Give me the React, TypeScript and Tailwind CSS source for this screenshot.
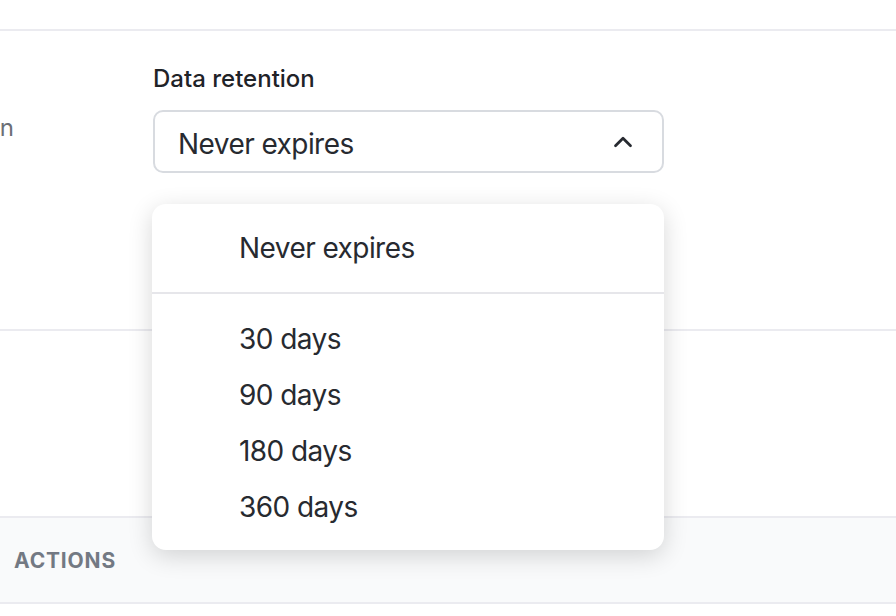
import { ChevronUp } from "lucide-react";

const options = ["30 days", "90 days", "180 days", "360 days"];

export default function App() {
  return (
    <div
      className="relative h-[616px] w-[896px] overflow-hidden bg-white text-[#272a30]"
      style={{ fontFamily: "Inter, 'Noto Sans', sans-serif" }}
    >
      {/* top strip */}
      <div className="h-[31px] border-b-2 border-[#ebebf0]" />

      {/* settings row */}
      <div className="flex h-[300px] border-b-2 border-[#ebebf0]">
        <div className="flex w-[153px] shrink-0 pt-[79px]">
          <div className="flex w-[14px] justify-end overflow-hidden whitespace-nowrap text-[24px] text-[#6b6f76]">
            Retention
          </div>
        </div>
        <div className="flex w-[511px] flex-col pt-[32px]">
          <label className="mb-[15px] text-[24px] font-medium leading-[32px] text-[#1f2328]">
            Data retention
          </label>
          <button className="flex h-[63px] items-center justify-between rounded-[10px] border-2 border-[#d8dbe0] bg-white pl-[23px] pr-[24px] text-left">
            <span className="pt-[4px] text-[28px] tracking-[-0.02em]">Never expires</span>
            <ChevronUp className="h-[30px] w-[30px]" strokeWidth={2.2} />
          </button>
        </div>
      </div>

      {/* empty row */}
      <div className="h-[185px]" />

      {/* table header */}
      <div className="flex h-[88px] items-center border-y-2 border-[#ebebf0] bg-[#f9fafb] pl-[14px]">
        <span className="pt-[2px] text-[21px] font-bold uppercase tracking-[0.04em] text-[#737983]">
          Actions
        </span>
      </div>

      {/* open dropdown */}
      <div className="absolute left-[152px] top-[204px] w-[512px] rounded-[14px] bg-white shadow-[0_6px_24px_rgba(0,0,0,0.16)]">
        <div className="flex h-[90px] items-center border-b-2 border-[#e6e6ea] pl-[87px] text-[28px] tracking-[-0.02em]">
          Never expires
        </div>
        <ul className="pt-[17px] pb-[15px]">
          {options.map((o) => (
            <li
              key={o}
              className="flex h-[56px] items-center pl-[87px] text-[28px] tracking-[-0.02em]"
            >
              {o}
            </li>
          ))}
        </ul>
      </div>
    </div>
  );
}
